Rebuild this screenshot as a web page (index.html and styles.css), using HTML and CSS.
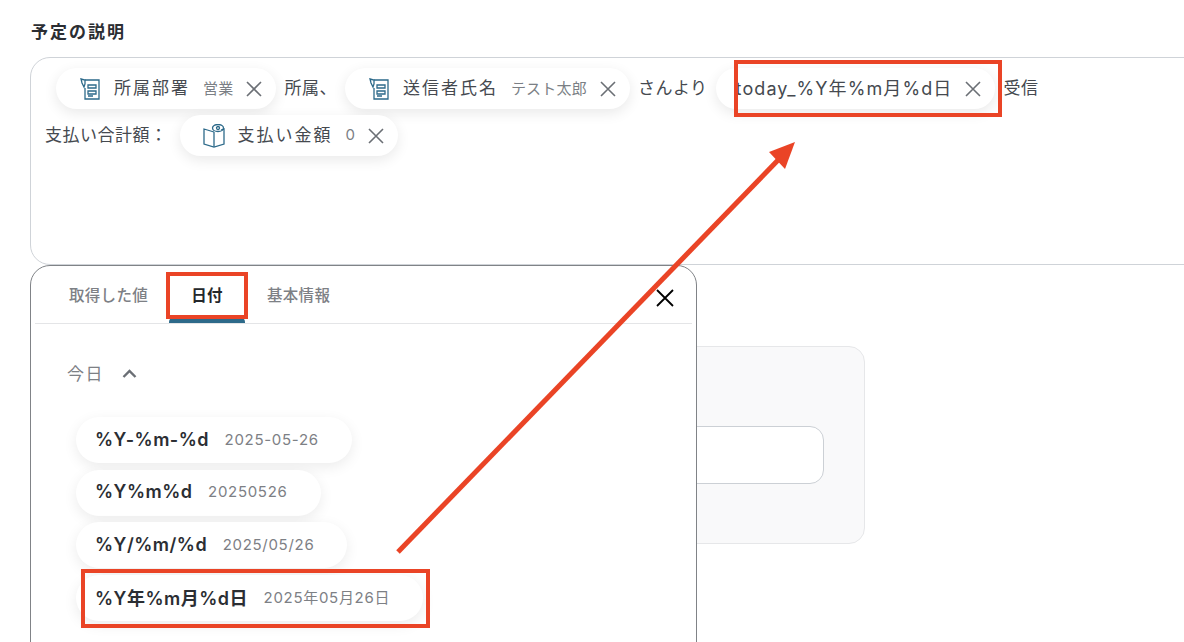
FILE: index.html
```html
<!DOCTYPE html>
<html lang="ja">
<head>
    <meta charset="UTF-8">
    <title>予定の説明</title>
    <link rel="stylesheet" href="styles.css">
</head>
<body>
    <div class="page">
        <h2 class="field-title">予定の説明</h2>
        <div class="desc-field">
            <div class="desc-row first">
                <span class="chip">
                    <svg class="chip-icon" viewBox="0 0 24 24"><path d="M7 3h14v19H7V11"/><path d="M3 2l4 1v4l-1 3-2-4z"/><path d="M10 8h8v3h-8zM10 14h8v3h-8zM10 19h5"/></svg>
                    <span class="chip-name">所属部署</span><span class="chip-value">営業</span>
                    <svg class="chip-x" viewBox="0 0 16 16"><path d="M1 1l14 14M15 1L1 15"/></svg>
                </span>
                <span class="plain">所属、</span>
                <span class="chip">
                    <svg class="chip-icon" viewBox="0 0 24 24"><path d="M7 3h14v19H7V11"/><path d="M3 2l4 1v4l-1 3-2-4z"/><path d="M10 8h8v3h-8zM10 14h8v3h-8zM10 19h5"/></svg>
                    <span class="chip-name">送信者氏名</span><span class="chip-value">テスト太郎</span>
                    <svg class="chip-x" viewBox="0 0 16 16"><path d="M1 1l14 14M15 1L1 15"/></svg>
                </span>
                <span class="plain">さんより</span>
                <span class="chip date-chip">
                    <span class="chip-name latin">today_%Y年%m月%d日</span>
                    <svg class="chip-x" viewBox="0 0 16 16"><path d="M1 1l14 14M15 1L1 15"/></svg>
                </span>
                <span class="plain">受信</span>
            </div>
            <div class="desc-row">
                <span class="plain label">支払い合計額：</span>
                <span class="chip">
                    <svg class="chip-icon" viewBox="0 0 24 24"><path d="M12 8L2 5v15l10 3 10-3V5l-3 1"/><path d="M12 8v15"/><ellipse cx="16" cy="4" rx="5.500" ry="3.500"/><circle cx="16" cy="4" r="1.500"/></svg>
                    <span class="chip-name">支払い金額</span><span class="chip-value">0</span>
                    <svg class="chip-x" viewBox="0 0 16 16"><path d="M1 1l14 14M15 1L1 15"/></svg>
                </span>
            </div>
        </div>

        <div class="lower">
            <div class="back-card">
                <div class="back-input"></div>
            </div>

            <div class="picker">
                <div class="tabs">
                    <span class="tab tab-first">取得した値</span>
                    <span class="tab active">日付</span>
                    <span class="tab">基本情報</span>
                    <svg class="picker-close" viewBox="0 0 20 20"><path d="M2 2l16 16M18 2L2 18"/></svg>
                </div>
                <div class="group-head">
                    <span>今日</span>
                    <svg class="chevron" viewBox="0 0 16 10"><path d="M2 8l6-6 6 6"/></svg>
                </div>
                <div class="date-list">
                    <div class="date-item"><b>%Y-%m-%d</b><span>2025-05-26</span></div>
                    <div class="date-item"><b>%Y%m%d</b><span>20250526</span></div>
                    <div class="date-item"><b>%Y/%m/%d</b><span>2025/05/26</span></div>
                    <div class="date-item"><b>%Y年%m月%d日</b><span>2025年05月26日</span></div>
                </div>
            </div>
        </div>

        <!-- 注釈 -->
        <div class="mark mark-chip"></div>
        <div class="mark mark-tab"></div>
        <div class="mark mark-item"></div>
        <svg class="arrow" viewBox="0 0 1184 642">
            <path class="arrow-line" d="M398 552L782 156"/>
            <path class="arrow-head" d="M795 142L769 152 785 169z"/>
        </svg>
    </div>
</body>
</html>
```

FILE: styles.css
```css
* {
    box-sizing: border-box;
}

body {
    margin: 0;
    background: #fff;
    color: #45494f;
    font-family: 'Inter', 'Noto Sans CJK JP', sans-serif;
}

.page {
    position: relative;
    width: 1184px;
    height: 642px;
    overflow: hidden;
    padding: 21px 0 0 30px;
}

.field-title {
    margin: 0 0 14px 1px;
    font-size: 17px;
    line-height: 22px;
    font-weight: 600;
    letter-spacing: 2px;
    color: #2b2e33;
}

.desc-field {
    width: 1200px;
    height: 208px;
    border: 1px solid #cfd3d8;
    border-radius: 20px;
    padding: 10px 14px;
}

.desc-row {
    display: flex;
    align-items: center;
    gap: 8px;
    height: 41px;
    margin-bottom: 6px;
}

.desc-row.first {
    padding-left: 11px;
}

.plain {
    padding-bottom: 4px;
    font-size: 17px;
    letter-spacing: 0.500px;
    white-space: nowrap;
}

.plain.label {
    margin-right: 4px;
}

.chip {
    display: flex;
    align-items: center;
    height: 41px;
    padding: 0 14px 0 22px;
    background: #fff;
    border-radius: 21px;
    box-shadow: 0 4px 14px rgba(0, 0, 0, 0.09);
    white-space: nowrap;
}

.date-chip {
    padding-left: 20px;
}

.chip-icon {
    width: 24px;
    height: 24px;
    margin-right: 12px;
    fill: none;
    stroke: #2d6a8a;
    stroke-width: 1.300;
}

.chip-name {
    padding-bottom: 4px;
    font-size: 17px;
    letter-spacing: 2px;
}

.chip-name.latin {
    font-size: 18px;
    letter-spacing: 1.100px;
}

.chip-value {
    margin-left: 13px;
    padding-bottom: 2px;
    font-size: 15px;
    letter-spacing: 0.200px;
    color: #7b7f85;
}

.chip-x {
    width: 16px;
    height: 16px;
    margin-left: 13px;
    fill: none;
    stroke: #6b6f75;
    stroke-width: 1.600;
}

.lower {
    position: relative;
    height: 378px;
    padding-top: 81px;
}

.back-card {
    width: 835px;
    height: 198px;
    padding: 79px 40px 0 0;
    background: #f9f9fa;
    border: 1px solid #e6e7e9;
    border-radius: 16px;
}

.back-input {
    height: 58px;
    background: #fff;
    border: 1px solid #ccd0d5;
    border-radius: 14px;
}

.picker {
    position: absolute;
    top: 0;
    left: 0;
    width: 667px;
    height: 400px;
    background: #fff;
    border: 1px solid #808387;
    border-radius: 20px;
    padding: 0 4px;
}

.tabs {
    position: relative;
    display: flex;
    height: 58px;
    border-bottom: 1px solid #e4e5e7;
    padding-left: 34px;
}

.tab {
    padding-top: 19px;
    font-size: 15.500px;
    line-height: 22px;
    font-weight: 500;
    letter-spacing: 0.300px;
    color: #7d8085;
    white-space: nowrap;
}

.tab-first {
    margin-right: 21px;
}

.tab.active {
    position: relative;
    width: 76px;
    margin-right: 22px;
    text-align: center;
    font-weight: 600;
    color: #24272b;
}

.tab.active::after {
    content: "";
    position: absolute;
    left: 0;
    right: 0;
    bottom: 0;
    height: 6px;
    background: #2d6a8a;
    border-radius: 5px 5px 0 0;
}

.picker-close {
    position: absolute;
    top: 22px;
    right: 17px;
    width: 20px;
    height: 20px;
    fill: none;
    stroke: #000;
    stroke-width: 1.800;
}

.group-head {
    display: flex;
    align-items: center;
    gap: 17px;
    padding: 28px 0 0 32px;
    height: 72px;
    font-size: 17px;
    line-height: 24px;
    letter-spacing: 1.500px;
    color: #7d8085;
}

.chevron {
    width: 17px;
    height: 10px;
    fill: none;
    stroke: #6b6f75;
    stroke-width: 2.400;
}

.date-list {
    display: flex;
    flex-direction: column;
    align-items: flex-start;
    gap: 6.500px;
    margin: 21px 0 0 41px;
}

.date-item {
    display: flex;
    align-items: center;
    gap: 15.500px;
    height: 46px;
    padding: 0 33px 2px 19px;
    background: #fff;
    border-radius: 23px;
    box-shadow: 0 4px 14px rgba(0, 0, 0, 0.08);
    white-space: nowrap;
}

.date-item b {
    font-size: 18px;
    font-weight: 600;
    letter-spacing: 0.500px;
    color: #2b2e33;
}

.date-item span {
    font-size: 15px;
    letter-spacing: 0.700px;
    color: #7d8085;
}

/* 赤い枠と矢印 */
.mark {
    position: absolute;
    border: 4px solid #ea4426;
}

.mark-chip {
    left: 734px;
    top: 60px;
    width: 268px;
    height: 57px;
}

.mark-tab {
    left: 166px;
    top: 272px;
    width: 82px;
    height: 47px;
}

.mark-item {
    left: 81px;
    top: 569px;
    width: 349px;
    height: 59px;
}

.arrow {
    position: absolute;
    top: 0;
    left: 0;
    width: 1184px;
    height: 642px;
}

.arrow-line {
    fill: none;
    stroke: #ea4426;
    stroke-width: 5;
}

.arrow-head {
    fill: #ea4426;
}
```
